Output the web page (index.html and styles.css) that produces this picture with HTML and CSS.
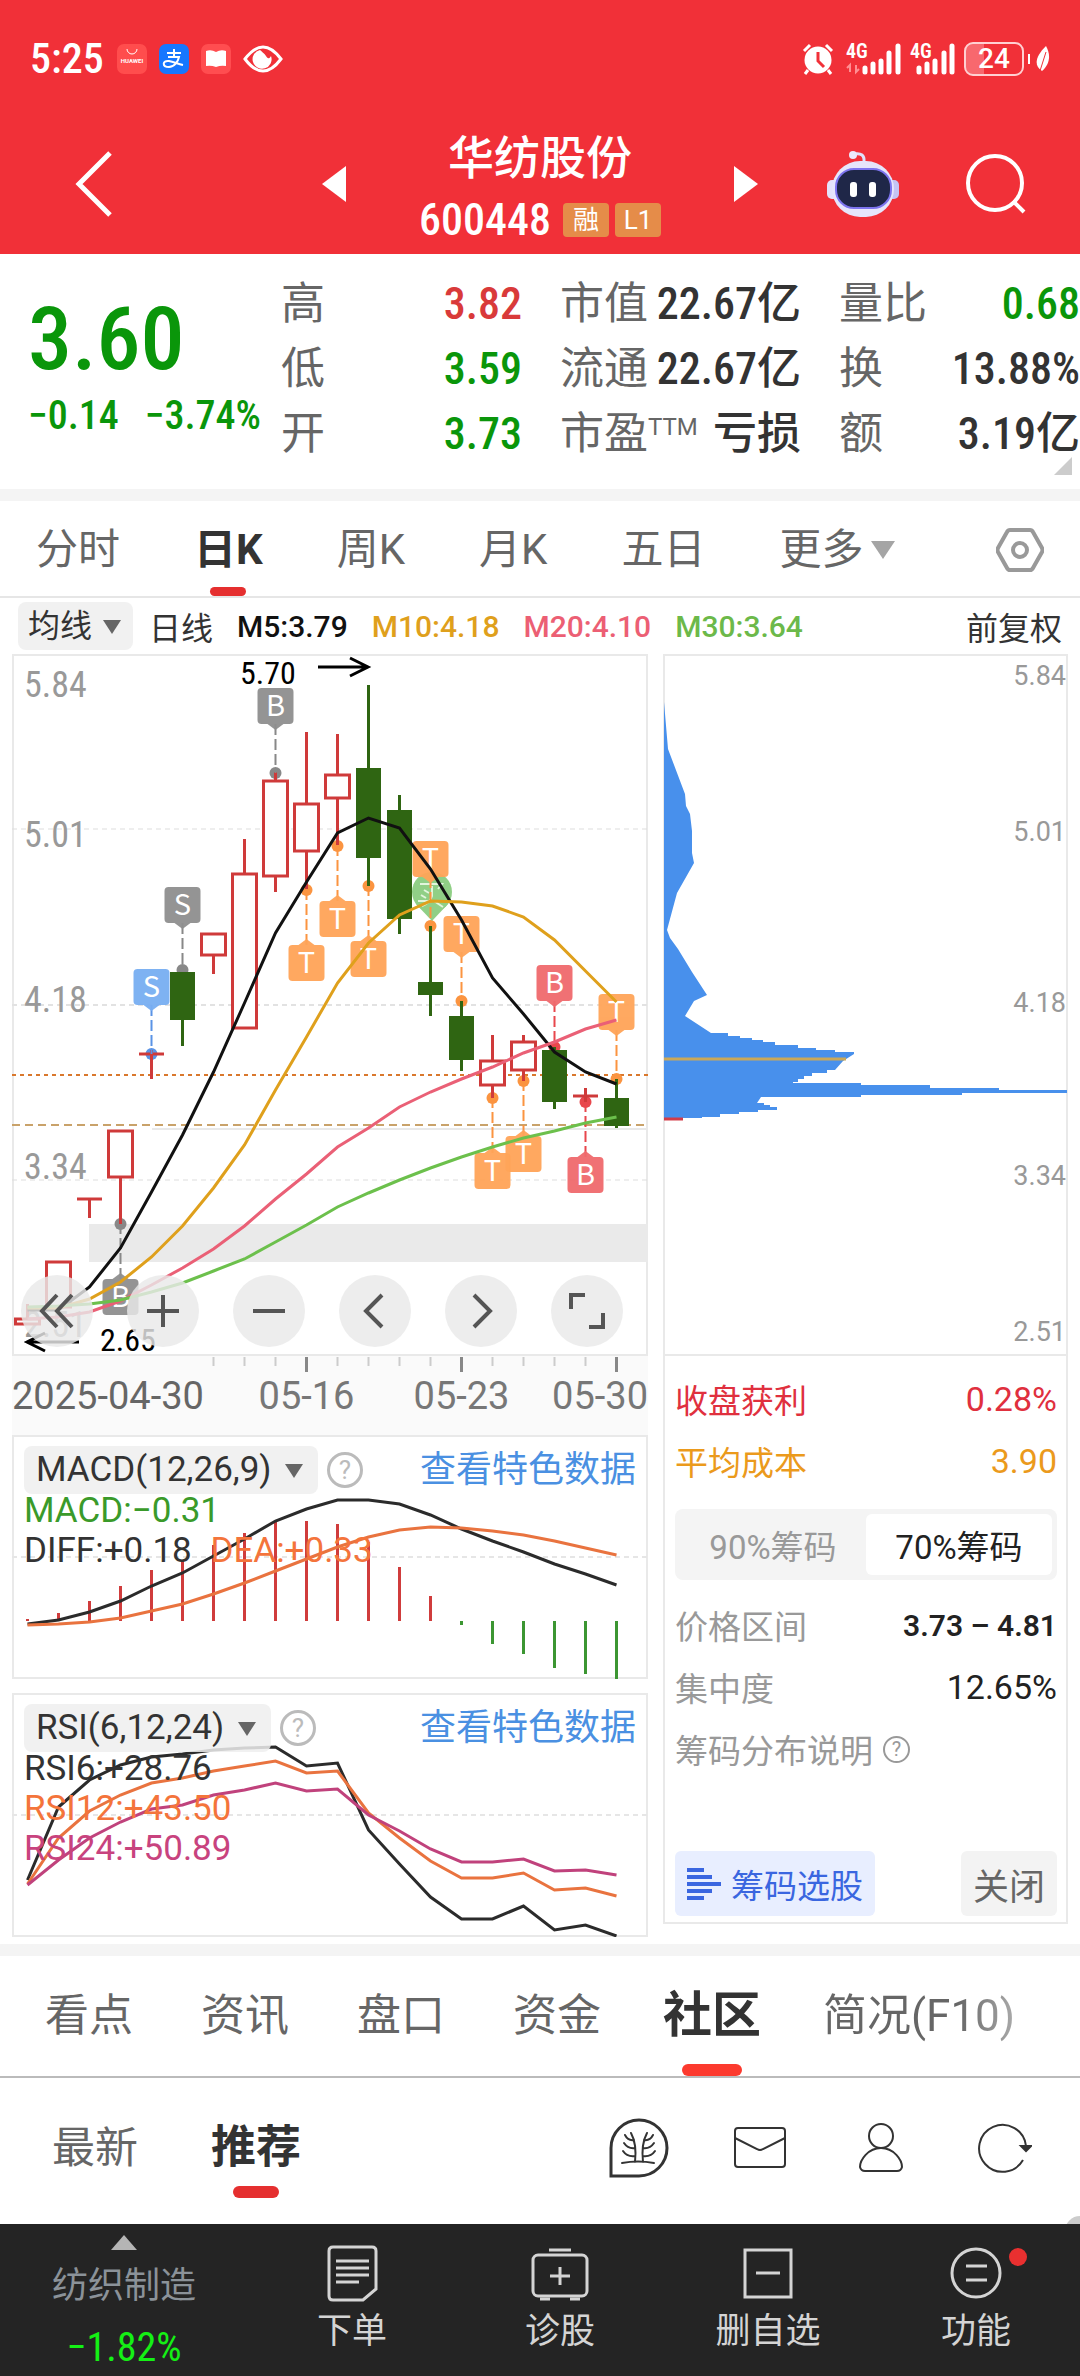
FILE: index.html
```html
<!doctype html>
<html lang="zh-CN">
<head>
    <meta charset="UTF-8">
    <meta name="viewport" content="width=device-width, initial-scale=1">
    <title>华纺股份 600448</title>
    <link rel="stylesheet" href="styles.css">
</head>
<body>
    <header class="top">
        <div class="status">
            <span class="clock">5:25</span>
            <svg class="app" viewBox="0 0 30 30"><rect width="30" height="30" rx="7" fill="#ff4d4d"/><path d="M10 5a5 5 0 0 0 10 0" fill="none" stroke="#fff" stroke-width="1"/><text x="15" y="19" font-size="6" font-weight="700" text-anchor="middle" fill="#fff">HUAWEI</text></svg>
            <svg class="app" viewBox="0 0 30 30"><rect width="30" height="30" rx="7" fill="#1677ff"/><path d="M8 9h14M15 5v8M9 13h11c-1 5-5 10-10 10-7 0-7-7 0-6 5 1 9 3 14 4" fill="none" stroke="#fff" stroke-width="2"/></svg>
            <svg class="app" viewBox="0 0 30 30"><rect width="30" height="30" rx="7" fill="#ff4d50"/><path d="M5 7q5-2 10 1 5-3 10-1v15q-5-1-10 1-5-2-10-1z" fill="#fff"/></svg>
            <svg class="eye" viewBox="0 0 40 30"><path d="M2 15Q20-9 38 15 20 39 2 15z" fill="none" stroke="#fff" stroke-width="3"/><path d="M17 6a9.500 9.500 0 1 0 11 6c-2 4-4 2-5 0-2-3-4-4-6-6z" fill="#fff"/></svg>
            <span class="grow"></span>
            <svg class="alarm" viewBox="0 0 32 32"><circle cx="16" cy="17" r="13.500" fill="#fff"/><path d="M2 8l6-6M30 8l-6-6M6 27l-3 4M26 27l3 4" stroke="#fff" stroke-width="3"/><path d="M16 9v9l6 6" fill="none" stroke="#f13038" stroke-width="3"/></svg>
            <svg class="signal" viewBox="0 0 56 32"><text x="0" y="15" font-size="20" font-weight="600" fill="#fff">4G</text><path d="M4 29v-7l-3 3M10 22v7l3-3" fill="none" stroke="#ff8f93" stroke-width="2"/><path d="M19 29v-4M27 29v-8M35 29V18M43 29V10M52 29V3" stroke="#fff" stroke-width="5" stroke-linecap="round"/></svg>
            <svg class="signal small" viewBox="0 0 46 32"><text x="0" y="15" font-size="20" font-weight="600" fill="#fff">4G</text><path d="M9 29v-4M17 29v-8M25 29V18M34 29V10M42 29V3" stroke="#fff" stroke-width="5" stroke-linecap="round"/></svg>
            <span class="battery">24</span>
            <svg class="leaf" viewBox="0 0 22 32"><path d="M0 11v10" stroke="#fff" stroke-width="4"/><path d="M18 3c5 9 4 18-4 25-9-6-6-15 4-25z" fill="#fff"/><path d="M11 31L18 9" stroke="#f13038" stroke-width="1"/></svg>
        </div>
        <div class="title-row">
            <div class="cell">
                <button class="back" aria-label="返回"><svg viewBox="0 0 40 66"><path d="M36 2L5 33l31 31" fill="none" stroke="#fff" stroke-width="5"/></svg></button>
            </div>
            <div class="stock">
                <button aria-label="上一只"><svg viewBox="0 0 24 36"><path d="M24 0v36L0 18z" fill="#fff"/></svg></button>
                <div class="name">
                    <h1>华纺股份</h1>
                    <p>600448 <i>融</i><i>L1</i></p>
                </div>
                <button aria-label="下一只"><svg viewBox="0 0 24 36"><path d="M0 0v36l24-18z" fill="#fff"/></svg></button>
            </div>
            <div class="cell right">
                <button aria-label="智能助手">
                    <svg class="robot" viewBox="0 0 72 68">
                        <path d="M27 4q11-2 10 8" fill="none" stroke="#dfe2fb" stroke-width="3"/><circle cx="26" cy="5" r="4" fill="#ece9fc"/>
                        <rect y="30" width="12" height="19" rx="5" fill="#e4e2fa"/><rect x="60" y="30" width="12" height="19" rx="5" fill="#c4c4f4"/>
                        <rect x="5" y="11" width="62" height="56" rx="28" fill="#e6e5fb"/>
                        <rect x="9" y="19" width="55" height="39" rx="18" fill="#1f2748" stroke="#7d74ef" stroke-width="2"/>
                        <rect x="23" y="32" width="7" height="15" rx="3" fill="#fff"/><rect x="42" y="32" width="7" height="15" rx="3" fill="#fff"/>
                    </svg>
                </button>
                <button aria-label="搜索"><svg class="search" viewBox="0 0 60 60"><circle cx="29" cy="29" r="27" fill="none" stroke="#fff" stroke-width="4"/><path d="M47 47l11 11" stroke="#fff" stroke-width="4"/></svg></button>
            </div>
        </div>
    </header>

    <section class="quote">
        <div class="price">
            <strong>3.60</strong>
            <p><span>−0.14</span><span>−3.74%</span></p>
        </div>
        <dl class="figures">
            <div><dt>高</dt><dd class="up">3.82</dd></div>
            <div><dt>市值</dt><dd>22.67亿</dd></div>
            <div><dt>量比</dt><dd class="down">0.68</dd></div>
            <div><dt>低</dt><dd class="down">3.59</dd></div>
            <div><dt>流通</dt><dd>22.67亿</dd></div>
            <div><dt>换</dt><dd>13.88%</dd></div>
            <div><dt>开</dt><dd class="down">3.73</dd></div>
            <div><dt>市盈<sup>TTM</sup></dt><dd>亏损</dd></div>
            <div><dt>额</dt><dd>3.19亿</dd></div>
        </dl>
    </section>

    <nav class="periods">
        <a href="#">分时</a>
        <a href="#" class="on">日K</a>
        <a href="#">周K</a>
        <a href="#">月K</a>
        <a href="#">五日</a>
        <a href="#" class="more">更多</a>
        <button aria-label="设置"><svg viewBox="0 0 48 46"><path d="M14 3h20q2 0 3 2l9 16q1 2 0 4l-9 16q-1 2-3 2H14q-2 0-3-2L2 25q-1-2 0-4l9-16q1-2 3-2z" fill="none" stroke="#999" stroke-width="4"/><circle cx="24" cy="23" r="7" fill="none" stroke="#999" stroke-width="4"/></svg></button>
    </nav>

    <div class="averages">
        <span class="pick"><select aria-label="指标"><option>均线</option></select></span>
        <span class="cn">日线</span>
        <span class="m5">M5:3.79</span>
        <span class="m10">M10:4.18</span>
        <span class="m20">M20:4.10</span>
        <span class="m30">M30:3.64</span>
        <span class="cn last">前复权</span>
    </div>

    <main class="charts">
        <div class="left">
            <div class="box kline">
                <svg id="kline" viewBox="0 0 636 702"></svg>
                <div class="tools">
                    <button aria-label="最左"><svg viewBox="0 0 36 36"><path d="M18 2L3 18l15 16M33 2L18 18l15 16"/></svg></button>
                    <button aria-label="放大"><svg viewBox="0 0 36 36"><path d="M2 18h32M18 2v32"/></svg></button>
                    <button aria-label="缩小"><svg viewBox="0 0 36 36"><path d="M2 18h32"/></svg></button>
                    <button aria-label="左移"><svg viewBox="0 0 36 36"><path d="M25 2L9 18l16 16"/></svg></button>
                    <button aria-label="右移"><svg viewBox="0 0 36 36"><path d="M11 2l16 16-16 16"/></svg></button>
                    <button aria-label="全屏"><svg viewBox="0 0 36 36"><path d="M2 16V2h14M34 20v14H20"/></svg></button>
                </div>
            </div>
            <svg id="axis" class="axis" viewBox="0 0 636 79"></svg>
            <div class="box sub">
                <svg id="macd" viewBox="0 0 636 244"></svg>
                <div class="legend">
                    <div class="head">
                        <span class="pick"><select aria-label="副图一"><option>MACD(12,26,9)</option></select></span>
                        <button class="help" aria-label="说明">?</button>
                        <a href="#">查看特色数据</a>
                    </div>
                    <p class="green">MACD:−0.31</p>
                    <p>DIFF:+0.18 <span class="orange">DEA:+0.33</span></p>
                </div>
            </div>
            <div class="box sub">
                <svg id="rsi" viewBox="0 0 636 244"></svg>
                <div class="legend">
                    <div class="head">
                        <span class="pick"><select aria-label="副图二"><option>RSI(6,12,24)</option></select></span>
                        <button class="help" aria-label="说明">?</button>
                        <a href="#">查看特色数据</a>
                    </div>
                    <p>RSI6:+28.76</p>
                    <p class="orange">RSI12:+43.50</p>
                    <p class="purple">RSI24:+50.89</p>
                </div>
            </div>
        </div>

        <div class="box chips">
            <svg class="spread" viewBox="0 0 405 700">
                <path fill="#4890ec" d="M1 48L5 95 22 140 23 152 27 160 29 177 29 199 31 209 14 239 4 276 7 284 15 295 29 318 44 341 31 347 22 362 48 379H65V382H77V384H89V386H100V388H112V391H135V394H153V396H172V398H191V400L180 407 172 416H164V419H149V422H141V425H135V428H130V429H198V431H267V434H336V436H404V439H299V441H198V443H98L94 449H101V451H107V453H114V456H95V458H76V460H57V463H39V464H1z"/>
                <path d="M1 405h182" stroke="#c9a85a" stroke-width="3"/>
                <path d="M1 465h19" stroke="#d23c48" stroke-width="3"/>
                <g font-size="27" fill="#999" text-anchor="end">
                    <text x="403" y="31">5.84</text>
                    <text x="403" y="187">5.01</text>
                    <text x="403" y="358">4.18</text>
                    <text x="403" y="531">3.34</text>
                    <text x="403" y="687">2.51</text>
                </g>
            </svg>
            <div class="detail">
                <p class="red"><span>收盘获利</span><b>0.28%</b></p>
                <p class="gold"><span>平均成本</span><b>3.90</b></p>
                <div class="switch"><button>90%筹码</button><button class="on">70%筹码</button></div>
                <p><span>价格区间</span><b class="strong">3.73 – 4.81</b></p>
                <p><span>集中度</span><b>12.65%</b></p>
                <p class="note"><span>筹码分布说明</span><button class="help" aria-label="筹码分布说明">?</button></p>
                <div class="actions">
                    <button class="choose"><svg viewBox="0 0 34 32"><path d="M0 2h17M0 9h25M0 16h34M0 23h25M0 30h17" stroke="#3a66e0" stroke-width="4"/></svg>筹码选股</button>
                    <button class="close">关闭</button>
                </div>
            </div>
        </div>
    </main>

    <nav class="sections">
        <a href="#">看点</a>
        <a href="#">资讯</a>
        <a href="#">盘口</a>
        <a href="#">资金</a>
        <a href="#" class="on">社区</a>
        <a href="#" class="fade">简况(F10)</a>
    </nav>

    <div class="feed">
        <a href="#">最新</a>
        <a href="#" class="on">推荐</a>
        <span class="grow"></span>
        <button aria-label="韭菜圈"><svg viewBox="0 0 60 60" stroke-width="3"><path d="M2 58V30A28 28 0 1 1 30 58z"/><path d="M13 45q16-3 32 0M26 44q2-18-4-29M34 44q-2-18 4-29M16 17q3 6 9 5M15 25q4 6 11 5M14 33q4 6 12 5M44 17q-3 6-9 5M45 25q-4 6-11 5M46 33q-4 6-12 5" stroke-width="2" stroke-linecap="round"/></svg></button>
        <button aria-label="私信"><svg viewBox="0 0 60 60" stroke-width="2"><rect x="5" y="10" width="50" height="39" rx="3"/><path d="M5 20l22 11q3 2 6 0l22-11"/></svg></button>
        <button aria-label="我的"><svg viewBox="0 0 60 60" stroke-width="2"><circle cx="30" cy="18" r="12"/><path d="M30 30c13 0 21 12 21 19q-1 4-5 4H14q-4 0-5-4c0-7 8-19 21-19z"/></svg></button>
        <button aria-label="刷新"><svg viewBox="0 0 60 60" stroke-width="2"><path d="M51 42A23.500 23.500 0 1 1 54 28"/><path d="M49 28h10l-5 5z" fill="#333"/></svg></button>
        <span class="float"></span>
    </div>

    <footer class="bar">
        <a href="#" class="index"><i></i><span>纺织制造</span><b>−1.82%</b></a>
        <a href="#"><svg viewBox="0 0 60 60"><path d="M11 3h39q4 0 4 4v38L41 56H11q-4 0-4-4V7q0-4 4-4z"/><path d="M14 17h33M14 24h33M14 31h33M14 38h23"/></svg><span>下单</span></a>
        <a href="#"><svg viewBox="0 0 60 60"><rect x="3" y="11" width="54" height="41" rx="5"/><path d="M19 6h22M30 23v18M20 32h20M10 55h10M40 55h10"/></svg><span>诊股</span></a>
        <a href="#"><svg viewBox="0 0 60 60"><path d="M7 6h46v47H7zM18 29h24"/></svg><span>删自选</span></a>
        <a href="#" class="dot"><svg viewBox="0 0 60 60"><circle cx="30" cy="29" r="24"/><path d="M20 22h21M20 36h21"/></svg><span>功能</span></a>
    </footer>

    <script src="chart.js"></script>
</body>
</html>
```
FILE: styles.css
```css
*{box-sizing: border-box; margin: 0; padding: 0;}
body{background: #fff; color: #333; font-family: Roboto, 'Noto Sans CJK SC', sans-serif; font-size: 32px;}
a{color: inherit; text-decoration: none;}
button, select{border: 0; background: none; color: inherit; font: inherit; appearance: none; cursor: pointer;}
svg{display: block;}
i, b{font-style: normal; font-weight: 400;}
.grow{flex: 1;}

/* 顶部 */
.top{background: #f13038; color: #fff;}
.status{display: flex; align-items: center; gap: 12px; height: 118px; padding: 0 30px;}
.clock{margin-right: 1px; font: 500 42px/48px 'Roboto Condensed', Roboto, sans-serif;}
.app{width: 30px; height: 30px;}
.eye{width: 40px; height: 30px;}
.alarm{width: 32px; height: 32px;}
.signal{width: 56px; height: 32px; margin-right: -4px; overflow: visible; font-family: 'Roboto Condensed', Roboto, sans-serif;}
.signal.small{width: 46px;}
.battery{width: 60px; height: 34px; border: 2px solid #ffd0d2; border-radius: 9px; background: linear-gradient(90deg, #f8686e 18px, transparent 18px); text-align: center; font: 500 28px/30px Roboto, sans-serif;}
.leaf{width: 22px; height: 32px; margin-left: -8px;}
.title-row{display: grid; grid-template-columns: 1fr auto 1fr; align-items: center; height: 136px; padding-bottom: 8px;}
.cell{display: flex; align-items: center; padding-left: 74px;}
.cell.right{justify-content: flex-end; gap: 67px; padding: 0 54px 0 0;}
.back svg{width: 40px; height: 66px;}
.robot{width: 72px; height: 68px;}
.search{width: 60px; height: 60px;}
.stock{display: flex; align-items: center; justify-content: space-between; width: 436px;}
.stock svg{width: 24px; height: 36px;}
.name{padding-top: 8px; text-align: center;}
.name h1{font-size: 46px; font-weight: 500; line-height: 64px;}
.name p{display: flex; align-items: center; gap: 6px; font: 500 44px/60px 'Roboto Condensed', Roboto, sans-serif;}
.name i{width: 46px; height: 34px; border-radius: 4px; background: #e58c49; font: 400 26px/34px Roboto, 'Noto Sans CJK SC', sans-serif;}
.name i:first-child{margin-left: 6px;}

/* 报价 */
.quote{position: relative; display: flex; height: 235px; padding: 18px 0 0 28px;}
.quote::after{content: ''; position: absolute; right: 8px; bottom: 14px; border: 9px solid; border-color: transparent #ccc #ccc transparent;}
.price{width: 253px; color: #0a960a;}
.price strong{display: block; padding-top: 14px; font: 500 88px/106px 'Roboto Condensed', Roboto, sans-serif;}
.price p{display: flex; gap: 26px; font: 500 40px/48px 'Roboto Condensed', Roboto, sans-serif;}
.figures{flex: 1; display: grid; grid-template-columns: repeat(3, 1fr); gap: 0 38px; align-content: start;}
.figures div{display: flex; justify-content: space-between; height: 65px; line-height: 65px; font-size: 44px; white-space: nowrap;}
.figures dt{color: #666;}
.figures sup{font-size: 24px; line-height: 24px; vertical-align: 14px;}
.figures dd{font-family: 'Roboto Condensed', 'Noto Sans CJK SC', sans-serif; font-weight: 500;}
.up{color: #d93a3a;}
.down{color: #0a960a;}

/* 周期 */
.periods{display: flex; align-items: center; gap: 74px; height: 109px; padding: 3px 36px 0; border-top: 12px solid #f4f4f4; border-bottom: 2px solid #e6e6e6; color: #666; font-size: 42px; line-height: 92px;}
.periods .on, .sections .on, .feed .on{position: relative; color: #333; font-weight: 700;}
.on::after{content: ''; position: absolute; left: 50%; bottom: 0; border-radius: 6px; background: #e52f2f; transform: translateX(-50%);}
.periods .on::after{width: 36px; height: 9px;}
.more::after{content: ''; display: inline-block; margin-left: 8px; border: 12px solid transparent; border-top: 18px solid #a5a5a5; border-bottom: 0; vertical-align: 5px;}
.periods button{margin-left: auto;}
.periods svg{width: 48px; height: 46px;}

.averages{display: flex; align-items: center; gap: 24px; height: 56px; padding: 0 18px; font-size: 30px; font-weight: 500;}
.averages .cn{font-size: 32px; font-weight: 400;}
.averages .pick{margin-right: -8px;}
.averages .last{margin-left: auto;}
.m5{color: #111;}
.m10{color: #dfa01c;}
.m20{color: #ec5f74;}
.m30{color: #6cb94a;}
.pick{position: relative; border-radius: 8px; background: rgba(238, 238, 238, .85);}
.pick::after{content: ''; position: absolute; right: 12px; top: 50%; margin-top: -6px; border: 9px solid transparent; border-top: 14px solid #666; border-bottom: 0; pointer-events: none;}
.pick select{display: block; height: 48px; padding: 0 40px 0 10px; font-size: 32px; font-weight: 400;}

/* 图表 */
.charts{display: grid; grid-template-columns: 636fr 405fr; gap: 15px; align-items: start; padding: 0 12px 7px;}
.box{position: relative; box-shadow: inset 0 0 0 2px #e9e9e9;}
.box svg{width: 100%;}
.tools{position: absolute; left: 9px; right: 25px; bottom: 9px; display: flex; justify-content: space-between;}
.tools button{width: 72px; height: 72px; padding: 18px; border-radius: 50%; background: rgba(233, 233, 233, .82);}
.tools svg{fill: none; stroke: #555; stroke-width: 4;}
.axis{width: 100%; background: #fafafa;}
.sub + .sub{margin-top: 14px;}
.legend{position: absolute; left: 0; right: 0; top: 11px; padding: 0 12px; font-size: 35px; line-height: 40px;}
.head{display: flex; align-items: center; height: 48px; margin-bottom: -3px;}
.head .pick{margin-right: 9px;}
.head select{padding: 0 46px 0 12px; font-size: 35px;}
.head .pick::after{right: 15px;}
.head a{margin-left: auto; font-size: 36px; color: #4a90e2;}
.legend p span{margin-left: 10px;}
.help{width: 36px; height: 36px; border: 3px solid #bbb; border-radius: 50%; color: #bbb; font-size: 26px; line-height: 30px;}
.green{color: #3a9a2a;}
.orange{color: #f4743b;}
.purple{color: #c8437e;}

.spread{border-bottom: 2px solid #e9e9e9;}
.detail{padding: 12px 11px 8px 12px; font-size: 33px;}
.detail p{display: flex; align-items: center; justify-content: space-between; height: 62px; color: #999;}
.detail b{color: #222; font-size: 34px;}
.detail .strong{font-size: 30px; font-weight: 600;}
.detail .red, .red b{color: #e0303e;}
.detail .gold, .gold b{color: #eb9a1c;}
.switch{display: flex; height: 71px; margin: 17px 0 14px; padding: 5px; border-radius: 8px; background: #f4f4f4; color: #999;}
.switch button{flex: 1;}
.switch .on{border-radius: 6px; background: #fff; color: #222;}
.switch .on::after{display: none;}
.detail .note{justify-content: flex-start; gap: 10px;}
.note .help{width: 27px; height: 27px; border: 2px solid #999; color: #999; font-size: 20px; line-height: 23px;}
.actions{display: flex; justify-content: space-between; margin-top: 71px;}
.actions button{height: 65px; padding: 0 12px; border-radius: 6px;}
.choose{display: flex; align-items: center; gap: 10px; background: #e8eeff; color: #3a66e0;}
.detail .choose svg{width: 34px; height: 32px;}
.close{background: #f3f3f3; color: #666; font-size: 36px;}

/* 栏目 */
.sections{display: flex; align-items: center; gap: 68px; height: 134px; padding: 0 45px; border-top: 12px solid #f4f4f4; border-bottom: 2px solid #bbb; color: #666; font-size: 44px; line-height: 120px; white-space: nowrap;}
.sections .on{margin: 0 -6px; font-size: 49px;}
.sections .on::after{width: 60px; height: 12px; background: #fc3a2e;}
.fade{background: linear-gradient(90deg, #666 70%, #aaa); background-clip: text; color: transparent;}
.feed{position: relative; display: flex; align-items: center; gap: 61px; height: 146px; padding: 0 48px 6px 52px; overflow: hidden; color: #666; font-size: 43px; line-height: 140px;}
.feed .on{margin-left: 12px; font-size: 45px;}
.feed .on::after{bottom: 20px; width: 46px; height: 12px;}
.feed svg{width: 60px; height: 60px; fill: none; stroke: #333;}
.float{position: absolute; right: -15px; bottom: -22px; width: 30px; height: 30px; border-radius: 50%; background: #ccc;}

.bar{display: grid; grid-template-columns: 248fr repeat(4, 208fr); height: 154px; background: #242424; color: #d4d4d4; font-size: 35px; line-height: 56px; text-align: center;}
.bar a{position: relative; padding-top: 20px;}
.bar svg{width: 60px; height: 60px; margin: 0 auto; fill: none; stroke: #d4d4d4; stroke-width: 3;}
.bar .index{display: flex; flex-direction: column; align-items: center; padding-top: 11px; color: #8b9299; font-size: 36px;}
.index i{border: 13px solid transparent; border-bottom: 15px solid #b5b5b5; border-top: 0;}
.index span{margin-top: 8px;}
.index b{margin-top: 8px; color: #15f015; font: 400 40px/52px 'Roboto Condensed', Roboto, sans-serif;}
.dot::after{content: ''; position: absolute; left: 50%; top: 24px; width: 18px; height: 18px; margin-left: 33px; border-radius: 50%; background: #e93030;}

/* svg */
#kline text{font-family: 'Roboto Condensed', Roboto, sans-serif;}
#kline .tag{font-family: 'Noto Sans CJK SC', sans-serif;}
```
FILE: chart.js
```javascript
var RED = '#cf3a3a', GREEN = '#2f6512',
    colors = {g: '#8f8f8f', b: '#78aef2', o: '#ffa458', r: '#f06a6d'},
    dots = {g: '#888', b: '#5a93e6', o: '#fb9440', r: '#e8474c'};

function x(i){
    return 15.5 + 31 * i;
}

function line(x1, y1, x2, y2, color, width, dash){
    return '<path d="M' + x1 + ' ' + y1 + 'L' + x2 + ' ' + y2 + '" stroke="' + color + '" stroke-width="' + width + '"' +
        (dash ? ' stroke-dasharray="' + dash + '"' : '') + '/>';
}

function curve(ys, color, width){
    var pts = ys.map(function(y, i){ return x(i) + ',' + y; }).join(' ');
    return '<polyline points="' + pts + '" fill="none" stroke="' + color + '" stroke-width="' + (width || 3) + '"/>';
}

function text(tx, ty, str, size, color, anchor){
    return '<text x="' + tx + '" y="' + ty + '" font-size="' + size + '" fill="' + color + '" text-anchor="' + (anchor || 'start') + '">' + str + '</text>';
}

//K线: 最高, 实体上, 实体下, 最低, 涨跌
var candles = [
    [650, 664, 671, 671, 1], [607, 607, 654, 654, 1], [545, 545, 545, 564, 1], [476, 476, 524, 570, 1],
    [396, 400, 400, 425, 1], [318, 318, 366, 392, 0], [279, 279, 302, 320, 1], [185, 219, 375, 375, 1],
    [118, 126, 223, 238, 1], [78, 149, 198, 235, 1], [80, 120, 145, 191, 1], [31, 114, 204, 232, 0],
    [141, 156, 265, 280, 0], [272, 328, 341, 362, 0], [347, 362, 406, 417, 0], [381, 406, 432, 444, 1],
    [381, 387, 417, 427, 1], [393, 396, 448, 455, 0], [434, 442, 442, 448, 1], [425, 444, 472, 474, 0]
];

//买卖点: 序号, 文字, 颜色, 框顶, 圆点
var tags = [
    [8, 'B', 'g', 34, 119], [5, 'S', 'g', 233, 316], [4, 'S', 'b', 315, 400], [9, 'T', 'o', 291, 236],
    [10, 'T', 'o', 247, 192], [11, 'T', 'o', 287, 232], [13, 'T', 'o', 187, 272], [14, 'T', 'o', 262, 347],
    [17, 'B', 'r', 311, 393], [19, 'T', 'o', 340, 425], [15, 'T', 'o', 499, 444], [16, 'T', 'o', 482, 427],
    [18, 'B', 'r', 503, 448], [3, 'B', 'g', 625, 570]
];

var html = line(0, 175, 636, 175, '#ddd', 1, '5 4') + line(0, 351, 636, 351, '#e2e2e2', 2, '5 4') + line(0, 526, 636, 526, '#ddd', 1, '5 4');
html += line(140, 475, 636, 475, '#e9e9e9', 2);
html += '<rect x="77" y="570" width="559" height="38" fill="#eaeaea"/>';
html += line(0, 421, 636, 421, '#d9782d', 2, '4 4') + line(0, 471, 636, 471, '#c9a26a', 2, '8 5');
[['5.84', 43], ['5.01', 193], ['4.18', 358], ['3.34', 525], ['2.51', 683]].forEach(function(t){
    html += text(12, t[1], t[0], 36, '#999');
});

//圆点在K线下面
tags.forEach(function(t){
    html += '<circle cx="' + x(t[0]) + '" cy="' + t[4] + '" r="6" fill="' + dots[t[2]] + '"/>';
});

candles.forEach(function(c, i){
    var color = c[4] ? RED : GREEN;
    html += line(x(i), c[0], x(i), c[1], color, 3) + line(x(i), c[2], x(i), c[3], color, 3);
    if(c[1] == c[2]){
        html += line(x(i) - 12.5, c[1], x(i) + 12.5, c[1], color, 3);
    }else if(c[4]){
        html += '<rect x="' + (x(i) - 12) + '" y="' + (c[1] + 1) + '" width="24" height="' + (c[2] - c[1] - 2) + '" fill="#fff" stroke="' + color + '" stroke-width="3"/>';
    }else{
        html += '<rect x="' + (x(i) - 12.5) + '" y="' + c[1] + '" width="25" height="' + (c[2] - c[1]) + '" fill="' + color + '"/>';
    }
});

html += '<g opacity=".75"><circle cx="420" cy="238" r="20" fill="#6cc05e"/><path d="M404 250l16 17 16-17z" fill="#6cc05e"/>' +
    '<path d="M408 230h22l-4 5M412 236l5 3M409 241l5 3M406 247h27M420 232v10q-2 7-10 10M422 247l9 6" fill="none" stroke="#d9f2d2" stroke-width="2"/></g>';

tags.forEach(function(t){
    var cx = x(t[0]), top = t[3], above = t[4] > top, edge = above ? top + 36 : top;
    html += line(cx, edge, cx, t[4], dots[t[2]], 2, '11 4');
    html += '<g opacity=".95"><rect x="' + (cx - 18) + '" y="' + top + '" width="36" height="36" rx="4" fill="' + colors[t[2]] + '"/>';
    html += '<path d="M' + (cx - 8) + ' ' + edge + 'h16l-8 ' + (above ? 6 : -6) + 'z" fill="' + colors[t[2]] + '"/></g>';
    html += '<text class="tag" x="' + cx + '" y="' + (top + 28) + '" font-size="29" fill="#fff" text-anchor="middle">' + t[1] + '</text>';
});

html += curve([656, 656, 633, 594, 538, 481, 418, 349, 279, 228, 179, 164, 174, 215, 266, 324, 360, 398, 418, 430], '#111');
html += curve([654, 654, 645, 628, 603, 572, 534, 491, 436, 383, 329, 289, 261, 247, 248, 252, 263, 286, 317, 348], '#dfa01c');
html += curve([665, 663, 658, 647, 631, 614, 595, 572, 545, 520, 493, 474, 453, 438, 425, 413, 399, 388, 375, 366], '#ea6076');
html += curve([653, 652, 650, 646, 638, 629, 617, 605, 588, 571, 553, 539, 526, 514, 503, 493, 484, 477, 469, 463], '#6cc04c');

html += text(228, 30, '5.70', 32, '#000') + text(88, 697, '2.65', 32, '#000');
html += '<path d="M306 13h50M338 4l18 9-18 9M67 688H15M33 679l-18 9 18 9" fill="none" stroke="#000" stroke-width="3"/>';
document.querySelector('#kline').innerHTML = html;

//日期
html = '';
for(var i = 6; i < 20; i++){
    html += i % 5 == 4 ? line(x(i), 1, x(i), 16, '#888', 3) : line(x(i), 1, x(i), 10, '#ccc', 2);
}
html += text(0, 53, '2025-04-30', 38, '#666') + text(x(9), 53, '05-16', 38, '#777', 'middle') +
    text(x(14), 53, '05-23', 38, '#777', 'middle') + text(636, 53, '05-30', 38, '#777', 'end');
document.querySelector('#axis').innerHTML = html;

//MACD
html = line(0, 122, 636, 122, '#e6e6e6', 2, '5 4');
[184, 178, 166, 151, 135, 125, 110, 98, 86, 86, 89, 107, 132, 161, 190, 209, 219, 233, 239, 244].forEach(function(y, i){
    html += line(x(i), 186, x(i), y, y < 186 ? '#d03c3c' : '#3c9632', 3);
});
html += curve([189, 185, 177, 166, 151, 138, 121, 104, 86, 74, 65, 65, 69, 80, 94, 106, 117, 129, 139, 150], '#2b2b2b');
html += curve([190, 189, 187, 183, 176, 169, 159, 148, 136, 124, 112, 102, 95, 92, 93, 96, 100, 106, 113, 120], '#e9733f');
document.querySelector('#macd').innerHTML = html;

//RSI
html = line(0, 122, 636, 122, '#e6e6e6', 2, '5 4');
html += curve([187, 114, 87, 72, 64, 61, 57, 55, 54, 73, 70, 137, 171, 204, 226, 226, 213, 237, 232, 243], '#2b2b2b');
html += curve([191, 145, 118, 102, 90, 85, 78, 73, 68, 80, 78, 120, 145, 168, 185, 185, 180, 197, 195, 203], '#e9733f');
html += curve([192, 167, 145, 129, 116, 112, 102, 97, 90, 98, 96, 122, 138, 156, 169, 169, 166, 178, 177, 182], '#c0427c');
document.querySelector('#rsi').innerHTML = html;
```
